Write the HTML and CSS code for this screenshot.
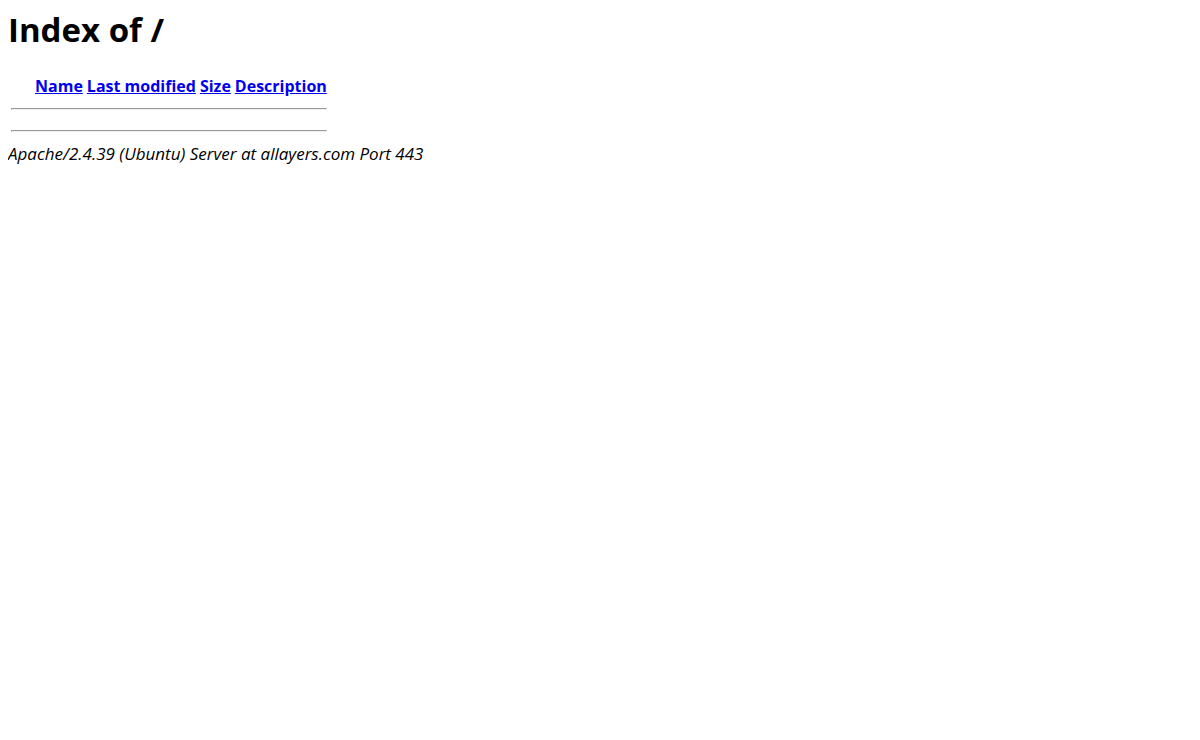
FILE: index.html
```html
<!DOCTYPE html>
<html lang="en">
<head>
  <meta charset="UTF-8" />
  <meta name="viewport" content="width=device-width, initial-scale=1.0"/>
  <title>Index of /</title>
  <link rel="stylesheet" href="styles.css">
</head>
<body>

  <h1 class="title">Index of /</h1>

  <!-- Directory listing -->
  <table class="listing">
    <tr>
      <th class="icon-col"></th>
      <th><a href="?C=N;O=D">Name</a></th>
      <th><a href="?C=M;O=A">Last modified</a></th>
      <th><a href="?C=S;O=A">Size</a></th>
      <th><a href="?C=D;O=A">Description</a></th>
    </tr>
    <tr>
      <td colspan="5"><hr></td>
    </tr>
    <tr>
      <td colspan="5"><hr></td>
    </tr>
  </table>

  <address class="server">Apache/2.4.39 (Ubuntu) Server at allayers.com Port 443</address>

</body>
</html>
```

FILE: styles.css
```css
body {
  margin: 8px;
  font-family: "Open Sans", "Noto Sans", sans-serif;
  font-size: 17px;
  line-height: 20px;
  color: #000;
  background: #fff;
}

.title {
  margin: 0 0 21px;
  font-size: 33px;
  line-height: 44px;
  font-weight: 700;
}

/* Directory listing */
.listing {
  border-spacing: 2px;
  line-height: 20px;
}

.listing th,
.listing td {
  padding: 1px;
}

.listing th {
  font-size: 16px;
  font-weight: 700;
}

.listing .icon-col {
  width: 20px;
}

.listing a {
  color: #0000ee;
}

.listing hr {
  margin: 8px 0;
}

.server {
  font-style: italic;
  line-height: 22px;
}
```
